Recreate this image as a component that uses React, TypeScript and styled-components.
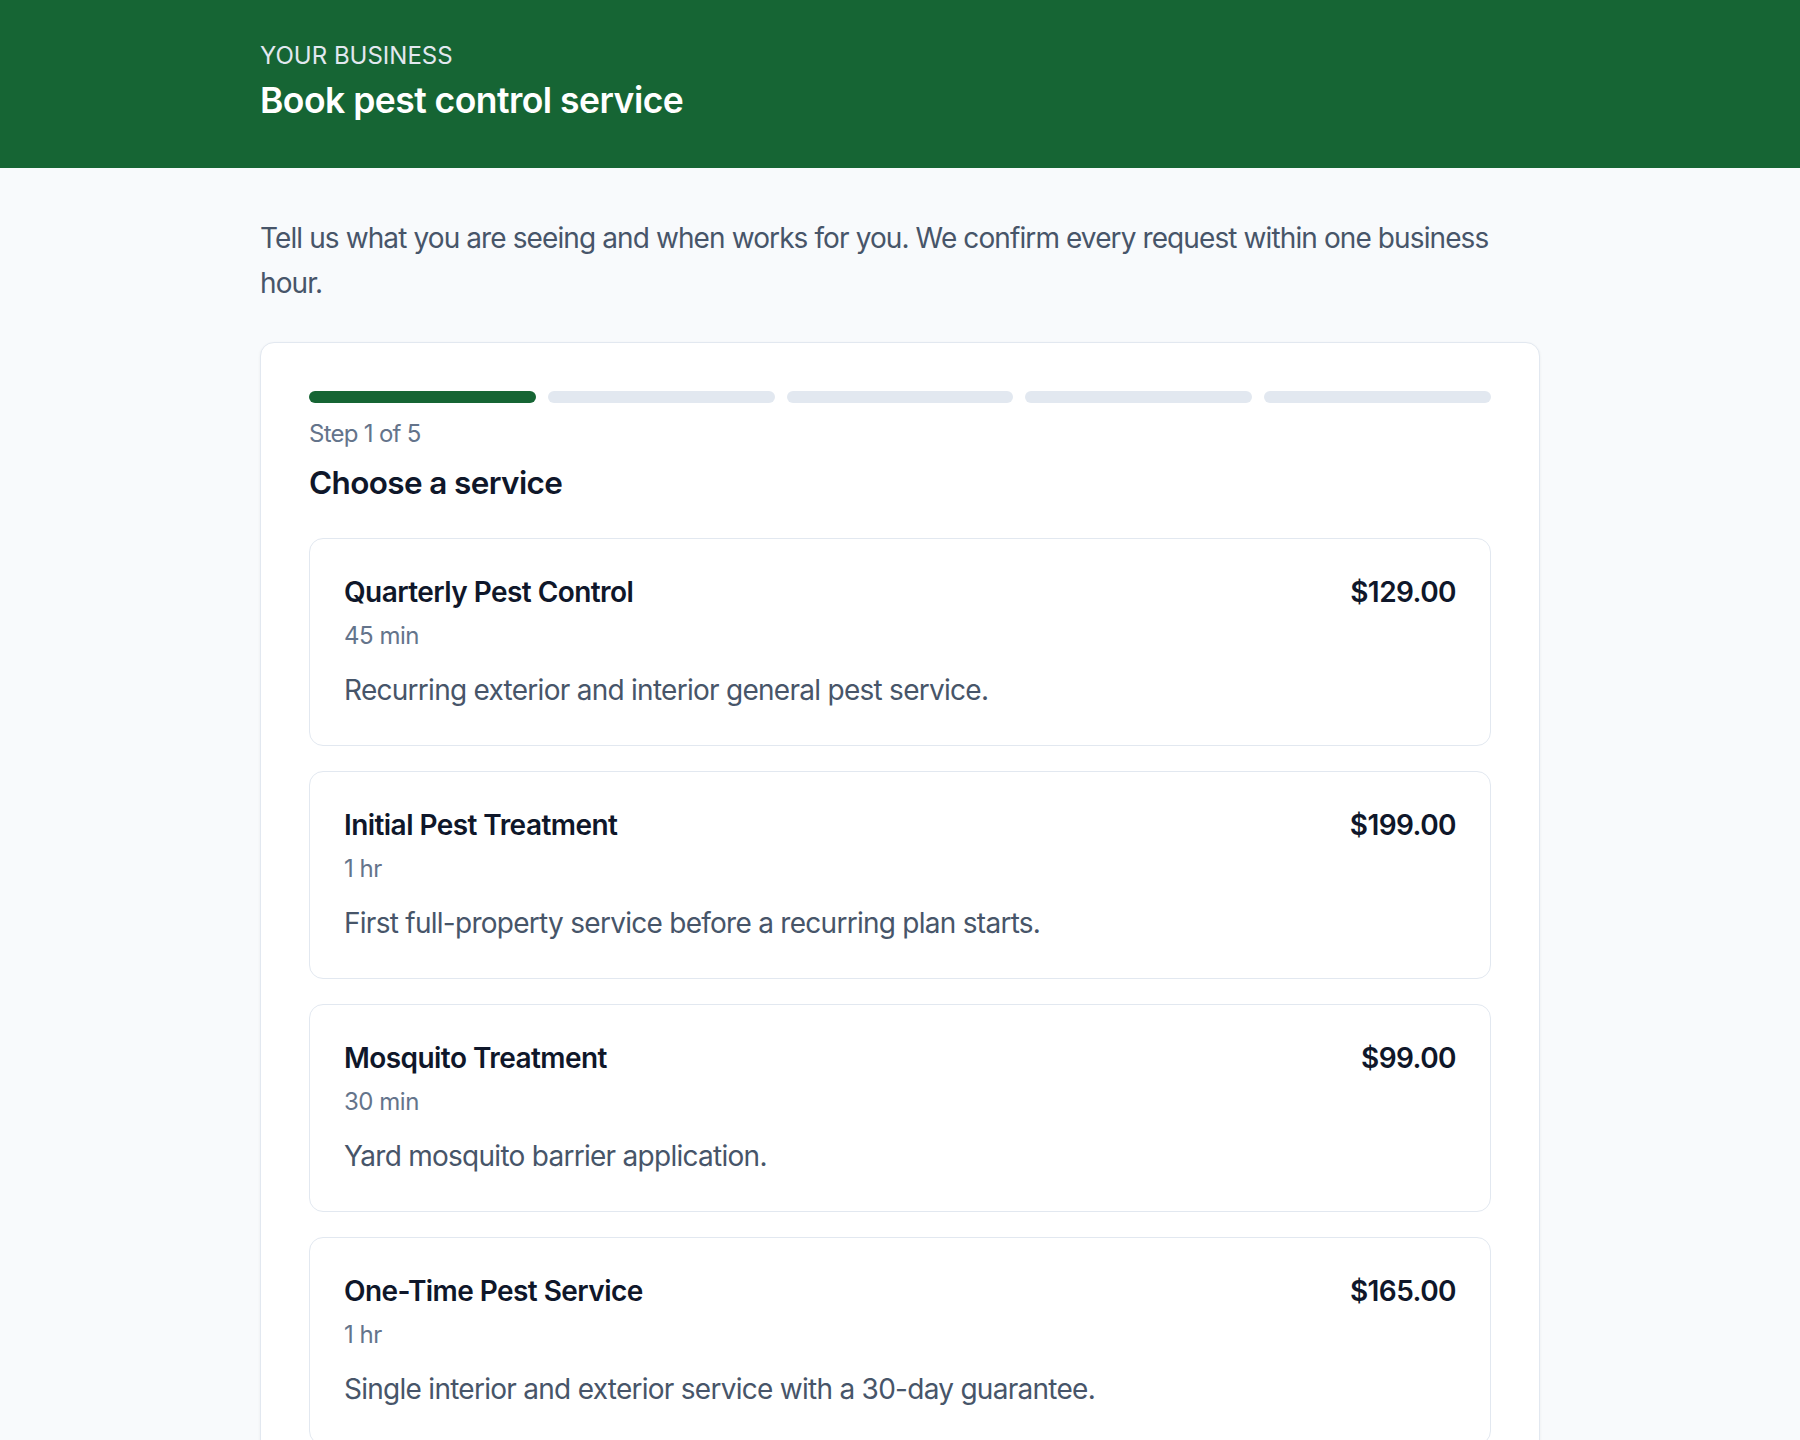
import React from 'react';
import styled, { createGlobalStyle } from 'styled-components';

type Service = {
  id: string;
  name: string;
  duration: string;
  price: string;
  description: string;
};

const services: Service[] = [
  {
    id: 'quarterly',
    name: 'Quarterly Pest Control',
    duration: '45 min',
    price: '$129.00',
    description: 'Recurring exterior and interior general pest service.',
  },
  {
    id: 'initial',
    name: 'Initial Pest Treatment',
    duration: '1 hr',
    price: '$199.00',
    description: 'First full-property service before a recurring plan starts.',
  },
  {
    id: 'mosquito',
    name: 'Mosquito Treatment',
    duration: '30 min',
    price: '$99.00',
    description: 'Yard mosquito barrier application.',
  },
  {
    id: 'one-time',
    name: 'One-Time Pest Service',
    duration: '1 hr',
    price: '$165.00',
    description: 'Single interior and exterior service with a 30-day guarantee.',
  },
];

const TOTAL_STEPS = 5;
const currentStep = 1;

const App: React.FC = () => {
  return (
    <>
      <GlobalStyle />
      <Header>
        <Inner>
          <Eyebrow>YOUR BUSINESS</Eyebrow>
          <PageTitle>Book pest control service</PageTitle>
        </Inner>
      </Header>
      <Main>
        <Inner>
          <Intro>
            Tell us what you are seeing and when works for you. We confirm every
            request within one business hour.
          </Intro>
          <Panel>
            <Progress>
              {Array.from({ length: TOTAL_STEPS }).map((_, i) => (
                <ProgressSegment key={i} $active={i < currentStep} />
              ))}
            </Progress>
            <StepLabel>
              Step {currentStep} of {TOTAL_STEPS}
            </StepLabel>
            <SectionTitle>Choose a service</SectionTitle>
            <ServiceList>
              {services.map(s => (
                <ServiceCard key={s.id} type="button">
                  <ServiceTop>
                    <ServiceName>{s.name}</ServiceName>
                    <Price>{s.price}</Price>
                  </ServiceTop>
                  <Duration>{s.duration}</Duration>
                  <Description>{s.description}</Description>
                </ServiceCard>
              ))}
            </ServiceList>
          </Panel>
        </Inner>
      </Main>
    </>
  );
};

const GlobalStyle = createGlobalStyle`
  * {
    box-sizing: border-box;
  }
  body {
    margin: 0;
    background: #f8fafc;
    font-family: Inter, "Noto Sans", sans-serif;
    color: #0f172a;
    -webkit-font-smoothing: antialiased;
  }
`;

const Inner = styled.div`
  max-width: 1280px;
  margin: 0 auto;
`;

const Header = styled.header`
  background: #166534;
  height: 168px;
  padding-top: 39px;
`;

const Eyebrow = styled.div`
  font-size: 24px;
  line-height: 34px;
  color: #e2e8f0;
`;

const PageTitle = styled.h1`
  margin: 6px 0 0;
  font-size: 35.5px;
  line-height: 44px;
  font-weight: 600;
  color: #ffffff;
  letter-spacing: -0.015em;
`;

const Main = styled.main`
  padding: 48px 0 48px;
`;

const Intro = styled.p`
  margin: 0 0 36px;
  font-size: 28px;
  line-height: 45px;
  color: #475569;
  letter-spacing: -0.032em;
`;

const Panel = styled.section`
  background: #ffffff;
  border: 1px solid #e2e8f0;
  border-radius: 14px;
  padding: 48px;
  box-shadow: 0 1px 3px rgba(15, 23, 42, 0.06);
`;

const Progress = styled.div`
  display: grid;
  grid-template-columns: repeat(5, 1fr);
  gap: 12px;
`;

const ProgressSegment = styled.div<{ $active: boolean }>`
  height: 12px;
  border-radius: 999px;
  background: ${p => (p.$active ? '#166534' : '#e2e8f0')};
`;

const StepLabel = styled.div`
  margin-top: 12px;
  font-size: 24px;
  line-height: 38px;
  color: #64748b;
  letter-spacing: -0.03em;
`;

const SectionTitle = styled.h2`
  margin: 10px 0 0;
  font-size: 31.5px;
  line-height: 40px;
  font-weight: 600;
  color: #0f172a;
  letter-spacing: -0.02em;
`;

const ServiceList = styled.div`
  margin-top: 35px;
  display: flex;
  flex-direction: column;
  gap: 25px;
`;

const ServiceCard = styled.button`
  display: block;
  width: 100%;
  text-align: left;
  font: inherit;
  background: #ffffff;
  border: 1px solid #e2e8f0;
  border-radius: 14px;
  padding: 36px 34px 32px;
  cursor: pointer;
`;

const ServiceTop = styled.div`
  display: flex;
  justify-content: space-between;
  align-items: baseline;
  gap: 24px;
`;

const ServiceName = styled.div`
  font-size: 28px;
  line-height: 35px;
  font-weight: 600;
  color: #0f172a;
  letter-spacing: -0.02em;
`;

const Price = styled.div`
  font-size: 28px;
  line-height: 35px;
  font-weight: 600;
  color: #0f172a;
  letter-spacing: -0.02em;
`;

const Duration = styled.div`
  margin-top: 8px;
  font-size: 24px;
  line-height: 36px;
  color: #64748b;
  letter-spacing: -0.02em;
`;

const Description = styled.p`
  margin: 14px 0 0;
  font-size: 28px;
  line-height: 45px;
  color: #475569;
  letter-spacing: -0.026em;
`;

export default App;
